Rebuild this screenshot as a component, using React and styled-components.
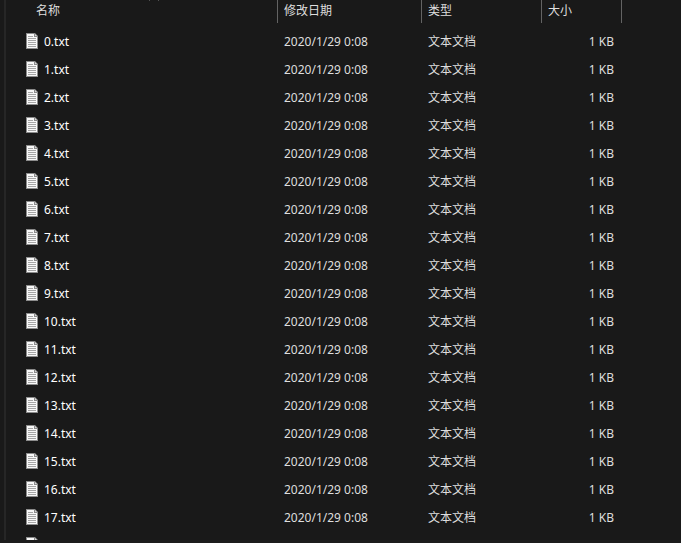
import React from "react";
import styled, { createGlobalStyle } from "styled-components";

const GlobalStyle = createGlobalStyle`
  * {
    box-sizing: border-box;
  }
  body {
    margin: 0;
    background: #191919;
    color: #dedede;
    font-family: "Noto Sans", "Noto Sans CJK SC", sans-serif;
    font-size: 12px;
  }
`;

const columns = [
  { label: "名称", width: 272, sorted: true },
  { label: "修改日期", width: 144 },
  { label: "类型", width: 120 },
  { label: "大小", width: 80 },
];

const files = Array.from({ length: 18 }, (_, i) => ({
  name: `${i}.txt`,
  date: "2020/1/29 0:08",
  type: "文本文档",
  size: "1 KB",
}));

const FileIcon = () => (
  <svg width="12" height="16" viewBox="0 0 12 16" aria-hidden="true">
    <path d="M0 0H9L12 3V16H0Z" fill="#8c8c8c" />
    <path d="M1 1H8V4H11V15H1Z" fill="#f8f8f8" />
    <path d="M9 1L11 3H9Z" fill="#d8d8d8" />
    <path
      d="M2 3.5H7M2 5.5H10M2 7.5H10M2 9.5H10M2 11.5H10M2 13.5H10"
      stroke="#a6a6a6"
    />
  </svg>
);

const App = () => {
  return (
    <>
      <GlobalStyle />
      <Window>
        <Splitter />
        <Pane>
          <Table>
            <colgroup>
              {columns.map((col) => (
                <Col key={col.label} $width={col.width} />
              ))}
              <col />
            </colgroup>
            <thead>
              <tr>
                {columns.map((col) => (
                  <HeadCell key={col.label} $first={col.sorted}>
                    <button type="button">{col.label}</button>
                    {col.sorted && (
                      <SortMark width="10" height="6" viewBox="0 0 10 6">
                        <path d="M0.5 5.5L5 1L9.5 5.5" />
                      </SortMark>
                    )}
                  </HeadCell>
                ))}
                <td />
              </tr>
            </thead>
            <tbody>
              {files.map((file) => (
                <tr key={file.name}>
                  <Cell>
                    <Name>
                      <FileIcon />
                      {file.name}
                    </Name>
                  </Cell>
                  <Cell>{file.date}</Cell>
                  <Cell>{file.type}</Cell>
                  <Cell $right>{file.size}</Cell>
                  <td />
                </tr>
              ))}
              {/* next row, only the top of its icon is in view */}
              <tr>
                <Cell colSpan={5}>
                  <Name>
                    <FileIcon />
                  </Name>
                </Cell>
              </tr>
            </tbody>
          </Table>
        </Pane>
      </Window>
    </>
  );
};

export default App;

const Window = styled.main`
  display: flex;
  height: 100vh;
  border-bottom: 3px solid #1c1c1c;
  overflow: hidden;
`;

const Splitter = styled.div`
  width: 6px;
  flex-shrink: 0;
  border-right: 2px solid #262626;
`;

const Pane = styled.section`
  flex: 1;
  overflow: hidden;
`;

const Table = styled.table`
  width: 100%;
  table-layout: fixed;
  border-collapse: collapse;
`;

const Col = styled.col`
  width: ${(props) => props.$width}px;
`;

const HeadCell = styled.th`
  position: relative;
  height: 28px;
  padding: 0;
  vertical-align: top;

  button {
    display: block;
    width: 100%;
    height: 23px;
    padding: 0 0 2px ${(props) => (props.$first ? 30 : 6)}px;
    border: 0;
    border-right: 1px solid #636363;
    background: none;
    color: inherit;
    font: inherit;
    font-weight: 400;
    line-height: 20px;
    text-align: left;
  }
`;

/* only the feet of the arrow show under the window edge */
const SortMark = styled.svg`
  position: absolute;
  top: -5px;
  left: 143px;
  fill: none;
  stroke: #8a8a8a;
`;

const Cell = styled.td`
  height: 28px;
  padding: 0 8px 0 6px;
  line-height: 20px;
  text-align: ${(props) => (props.$right ? "right" : "left")};
  white-space: nowrap;
`;

const Name = styled.span`
  display: flex;
  align-items: center;
  gap: 6px;
  height: 20px;
  padding-left: 14px;
  color: #ffffff;

  svg {
    flex-shrink: 0;
    margin-bottom: 2px;
  }
`;
